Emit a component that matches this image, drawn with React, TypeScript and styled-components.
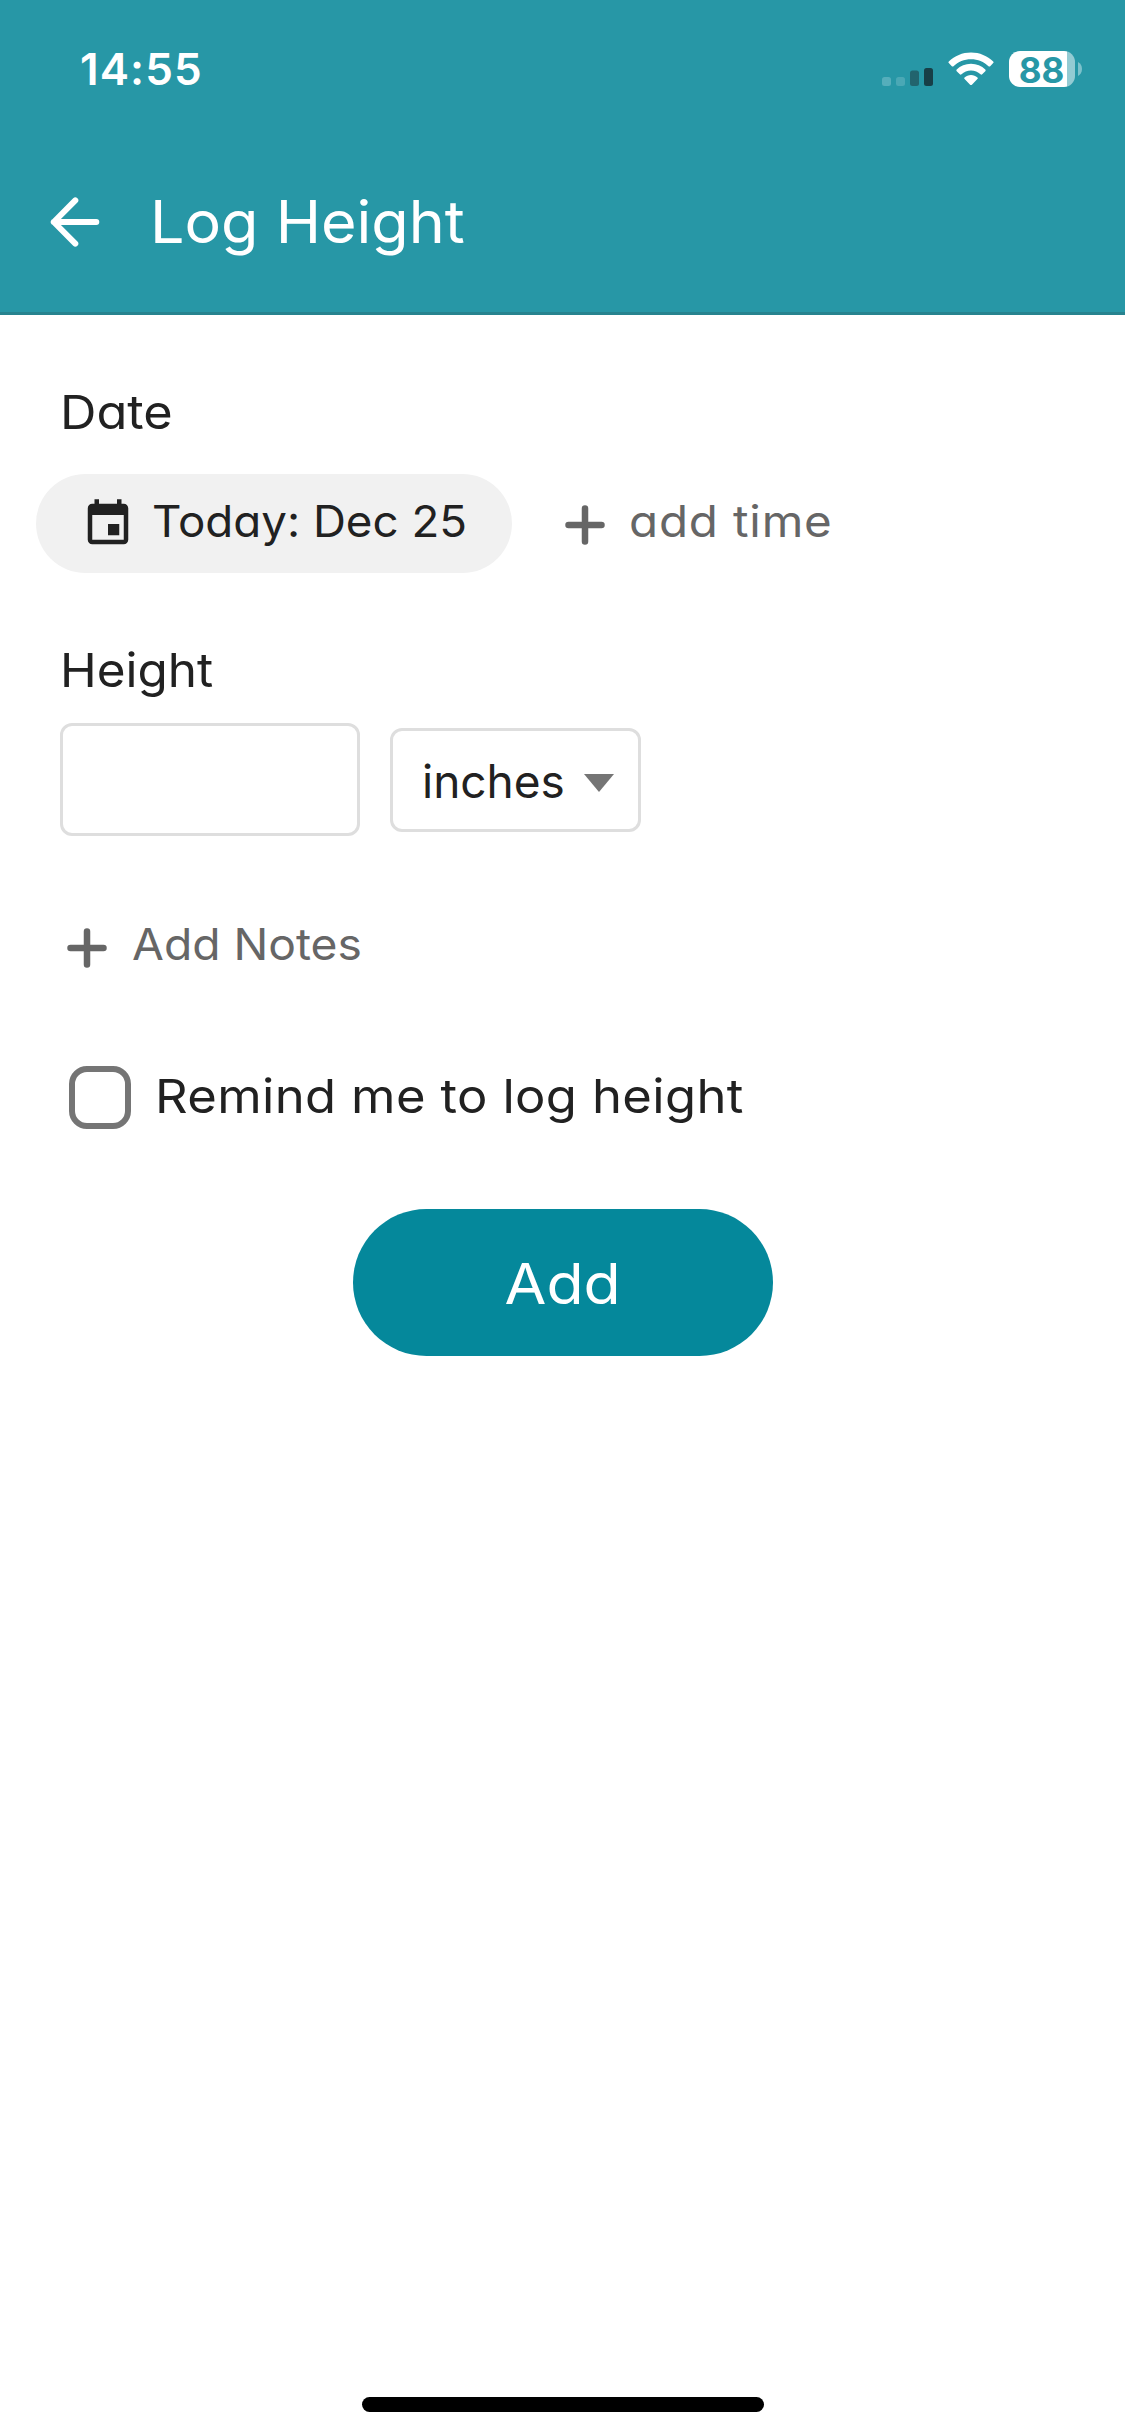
import React, { useState } from 'react';
import styled, { createGlobalStyle } from 'styled-components';

const GlobalStyle = createGlobalStyle`
  *, *::before, *::after { box-sizing: border-box; }
  body {
    margin: 0;
    background: #fff;
    color: #212121;
    font-family: Inter, "Liberation Sans", sans-serif;
  }
  button, input { font: inherit; color: inherit; background: none; border: 0; margin: 0; padding: 0; }
  svg { display: block; flex: none; }
`;

const Screen = styled.div`
  width: 1125px;
  height: 2436px;
  display: flex;
  flex-direction: column;
  background: #fff;
  overflow: hidden;
`;

const Header = styled.header`
  height: 315px;
  background: #2797a6;
  border-bottom: 3px solid #27838f;
`;

const StatusBar = styled.div`
  height: 138px;
  padding: 0 43px 0 80px;
  display: flex;
  align-items: center;
  justify-content: space-between;
`;

const StatusIcons = styled.div`
  display: flex;
  align-items: center;
`;

const Label = styled.span<{ $size: number; $spacing?: number; $weight?: number; $color?: string }>`
  font-size: ${p => p.$size}px;
  line-height: 60px;
  letter-spacing: ${p => p.$spacing ?? 0}px;
  font-weight: ${p => p.$weight ?? 400};
  color: ${p => p.$color ?? 'inherit'};
  white-space: nowrap;
`;

/* Geometric variant: single-storey "a" and slightly widened letters. */
const RoundLabel = styled(Label)<{ $stretch: number; $origin?: string }>`
  display: block;
  font-feature-settings: "cv11" 1;
  transform: scaleX(${p => p.$stretch});
  transform-origin: ${p => p.$origin ?? 'left'} center;
`;

const Battery = styled.div`
  width: 66px;
  height: 36px;
  margin-left: 15px;
  border-radius: 11px;
  background: linear-gradient(90deg, #fff 58px, #93cbd3 58px);
  display: flex;
  align-items: center;
  justify-content: center;
  padding: 1px 1px 0 0;
`;

const NavBar = styled.div`
  height: 168px;
  padding-left: 49px;
  display: flex;
  align-items: center;
`;

const BackButton = styled.button`
  width: 101px;
  display: flex;
`;

const Form = styled.main`
  flex: 1;
  padding: 67px 0 0 60px;
  display: flex;
  flex-direction: column;
  align-items: flex-start;
`;

const DateRow = styled.div`
  margin: 32px 0 0 -24px;
  display: flex;
  align-items: center;
`;

const DatePill = styled.button`
  width: 476px;
  height: 99px;
  padding: 0 0 5px 45px;
  border-radius: 50px;
  background: #f1f1f1;
  display: flex;
  align-items: center;
  gap: 17px;
  svg { margin-top: 6px; }
`;

const GhostButton = styled.button<{ $shift?: number }>`
  display: flex;
  align-items: center;
  gap: 25px;
  color: #666;
  margin-left: ${p => p.$shift ?? 0}px;
  svg { margin-top: 8px; }
`;

const AddTime = styled(GhostButton)`
  padding-bottom: 5px;
  gap: 24px;
`;

const HeightLabel = styled.div`
  margin-top: 67px;
  display: flex;
`;

const HeightRow = styled.div`
  margin-top: 23px;
  display: flex;
  align-items: center;
  gap: 30px;
`;

const HeightInput = styled.input`
  width: 300px;
  height: 113px;
  border: 3px solid #dedede;
  border-radius: 12px;
  padding: 0 24px;
  font-size: 46px;
`;

const UnitSelect = styled.button`
  width: 251px;
  height: 104px;
  border: 3px solid #dedede;
  border-radius: 12px;
  padding: 3px 24px 0 29px;
  display: flex;
  align-items: center;
  justify-content: space-between;
  svg { margin-top: 3px; }
`;

const Notes = styled(GhostButton)`
  margin-top: 78px;
`;

const ReminderRow = styled.label`
  margin: 92px 0 0 9px;
  display: flex;
  align-items: center;
  gap: 24px;
  span { margin-bottom: 3px; }
`;

const Checkbox = styled.input.attrs({ type: 'checkbox' })`
  appearance: none;
  width: 62px;
  height: 63px;
  border: 6px solid #757575;
  border-radius: 18px;
  &:checked { background: #05889b; }
`;

const SubmitButton = styled.button`
  width: 420px;
  height: 147px;
  margin: 80px 0 0 293px;
  padding-top: 3px;
  border-radius: 74px;
  background: #05889b;
  color: #fff;
  display: flex;
  align-items: center;
  justify-content: center;
`;

const HomeIndicator = styled.div`
  width: 402px;
  height: 15px;
  margin: 0 auto 24px;
  border-radius: 8px;
  background: #000;
`;

const SignalIcon = styled(({ className }: { className?: string }) => (
  <svg className={className} width="51" height="18" viewBox="0 0 51 18">
    <rect x="0" y="9" width="9" height="9" rx="2.5" fill="#55aebb" />
    <rect x="14" y="9" width="9" height="9" rx="2.5" fill="#4aa8b5" />
    <rect x="28" y="2.5" width="9" height="15.5" rx="2.5" fill="#22646e" />
    <rect x="42" y="0" width="9" height="18" rx="2.5" fill="#173f47" />
  </svg>
))`
  margin-top: 15px;
`;

const WifiIcon = styled(({ className }: { className?: string }) => (
  <svg className={className} width="46" height="34" viewBox="0 0 46 34" fill="#fff">
    <path d="M23 .5C31.600.5 39.400 3.900 45.200 9.400c.5.5.5 1.200 0 1.700l-3 3.100c-.5.5-1.200.5-1.700 0C35.900 9.800 29.800 7.200 23 7.200S10.100 9.800 5.500 14.200c-.5.5-1.200.5-1.700 0l-3-3.100c-.5-.5-.5-1.200 0-1.700C6.600 3.900 14.400.5 23 .5z" />
    <path d="M23 11.800c5.600 0 10.600 2.200 14.300 5.700.5.5.5 1.200 0 1.700l-3.100 3.100c-.5.5-1.200.5-1.700 0-2.500-2.300-5.800-3.700-9.500-3.700s-7 1.400-9.500 3.700c-.5.5-1.200.5-1.700 0l-3.100-3.100c-.5-.5-.5-1.200 0-1.700 3.700-3.500 8.700-5.700 14.300-5.700z" />
    <path d="M23 23c2.500 0 4.700.9 6.400 2.400.5.4.5 1.200 0 1.700l-5.500 5.600c-.5.5-1.300.5-1.800 0l-5.500-5.600c-.5-.5-.5-1.300 0-1.700C18.300 23.900 20.500 23 23 23z" />
  </svg>
))`
  margin-left: 15px;
`;

const BatteryTip = styled(({ className }: { className?: string }) => (
  <svg className={className} width="4" height="14" viewBox="0 0 4 14">
    <path d="M0 0c2.500 1.200 4 3.900 4 7s-1.500 5.800-4 7z" fill="#7cc1cb" />
  </svg>
))`
  margin-left: 3px;
`;

const ArrowIcon = () => (
  <svg width="52" height="52" viewBox="0 0 52 52" fill="none" stroke="#fff" strokeWidth="6" strokeLinecap="round" strokeLinejoin="round">
    <path d="M47.300 26H4.800M26.300 4.400L4.800 26l21.500 21.600" />
  </svg>
);

const CalendarIcon = () => (
  <svg width="54" height="54" viewBox="0 0 24 24" fill="#212121">
    <path d="M17 12h-5v5h5v-5zM16 1v2H8V1H6v2H5c-1.110 0-1.990.9-1.990 2L3 19c0 1.100.89 2 2 2h14c1.100 0 2-.9 2-2V5c0-1.100-.9-2-2-2h-1V1h-2zm3 18H5V8h14v11z" />
  </svg>
);

const PlusIcon = () => (
  <svg width="40" height="40" viewBox="0 0 40 40" stroke="#666" strokeWidth="6.500" strokeLinecap="round">
    <path d="M20 3.500v33M3.500 20h33" />
  </svg>
);

const CaretIcon = () => (
  <svg width="30" height="18" viewBox="0 0 30 18">
    <path d="M0 0h30L15 18z" fill="#757575" />
  </svg>
);

export default function App() {
  const [height, setHeight] = useState('');
  return (
    <Screen>
      <GlobalStyle />
      <Header>
        <StatusBar>
          <Label $size={44} $weight={600} $spacing={1.1} $color="#fff">14:55</Label>
          <StatusIcons>
            <SignalIcon />
            <WifiIcon />
            <Battery>
              <Label $size={35} $weight={700} $color="#2797a6">88</Label>
            </Battery>
            <BatteryTip />
          </StatusIcons>
        </StatusBar>
        <NavBar>
          <BackButton aria-label="Back"><ArrowIcon /></BackButton>
          <RoundLabel $size={59} $stretch={1.034} $color="#fff">Log Height</RoundLabel>
        </NavBar>
      </Header>
      <Form>
        <RoundLabel $size={47} $stretch={1.074}>Date</RoundLabel>
        <DateRow>
          <DatePill>
            <CalendarIcon />
            <RoundLabel $size={44} $stretch={1.038}>Today: Dec 25</RoundLabel>
          </DatePill>
          <AddTime $shift={53}>
            <PlusIcon />
            <RoundLabel $size={44} $stretch={1.08} $spacing={0.76}>add time</RoundLabel>
          </AddTime>
        </DateRow>
        <HeightLabel>
          <RoundLabel $size={47} $stretch={1.052}>Height</RoundLabel>
        </HeightLabel>
        <HeightRow>
          <HeightInput value={height} onChange={e => setHeight(e.target.value)} />
          <UnitSelect>
            <Label $size={46}>inches</Label>
            <CaretIcon />
          </UnitSelect>
        </HeightRow>
        <Notes $shift={7}>
          <PlusIcon />
          <RoundLabel $size={44} $stretch={1.05}>Add Notes</RoundLabel>
        </Notes>
        <ReminderRow>
          <Checkbox />
          <RoundLabel $size={47} $stretch={1.08} $spacing={0.33}>Remind me to log height</RoundLabel>
        </ReminderRow>
        <SubmitButton>
          <RoundLabel $size={56} $stretch={1.084} $origin="center">Add</RoundLabel>
        </SubmitButton>
      </Form>
      <HomeIndicator />
    </Screen>
  );
}
